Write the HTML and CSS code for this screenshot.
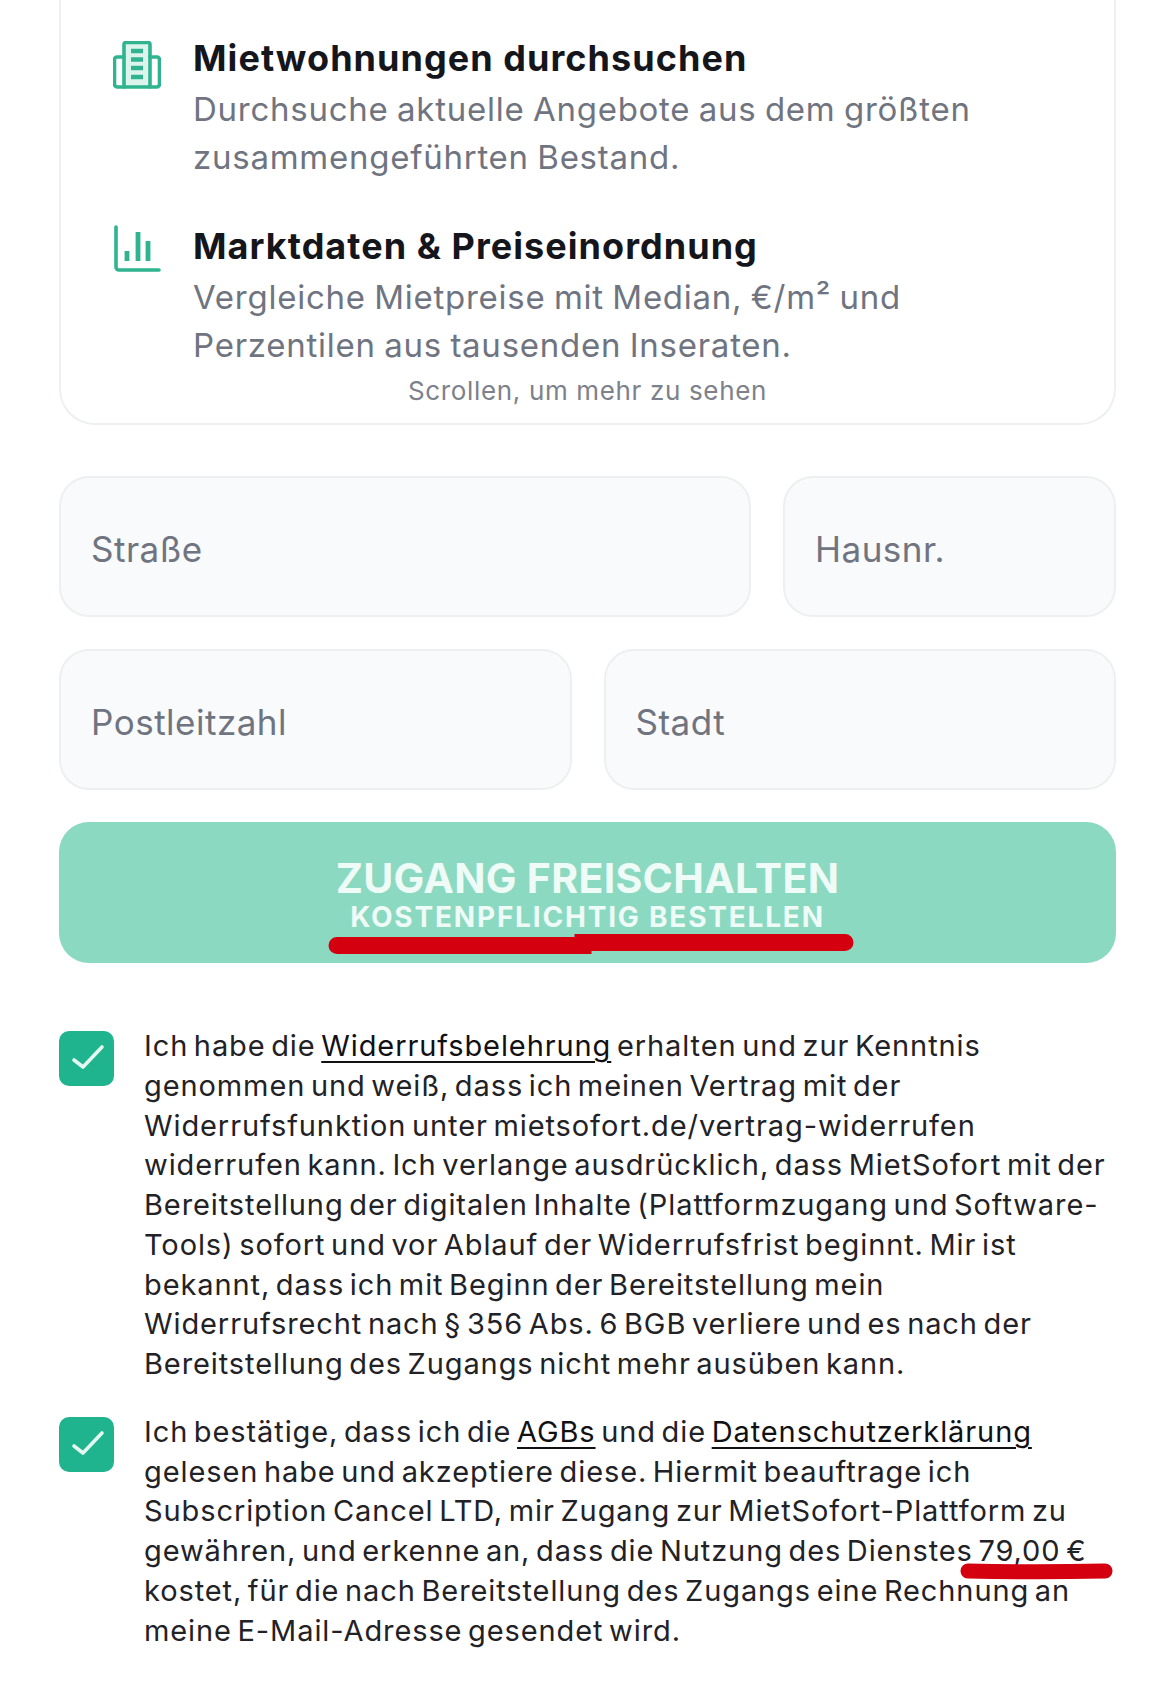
FILE: index.html
```html
<!DOCTYPE html>
<html lang="de">
<head>
  <meta charset="UTF-8">
  <meta name="viewport" content="width=device-width, initial-scale=1.0">
  <title>Zugang freischalten</title>
  <link rel="stylesheet" href="styles.css">
</head>
<body>
  <div class="container">

    <!-- Features Card -->
    <div class="card">
      <div class="feature">
        <svg class="feature-icon" viewBox="0 0 48 48" fill="none" stroke="#2fb48f" stroke-width="3.6" stroke-linejoin="round" stroke-linecap="round">
          <path d="M11 46V3.500a2 2 0 0 1 2-2h22a2 2 0 0 1 2 2V46" fill="#dcf4ec"/>
          <path d="M11 16H4a2.500 2.500 0 0 0-2.500 2.500V43a3 3 0 0 0 3 3h39a3 3 0 0 0 3-3V18.500a2.500 2.500 0 0 0-2.500-2.500H37"/>
          <path d="M18 10h12M18 18.500h12M18 27h12M18 36h12" stroke-width="4.400" stroke-linecap="butt"/>
        </svg>
        <div class="feature-text">
          <h3 class="feature-title">Mietwohnungen durchsuchen</h3>
          <p class="feature-desc">Durchsuche aktuelle Angebote aus dem größten<br>zusammengeführten Bestand.</p>
        </div>
      </div>
      <div class="feature">
        <svg class="feature-icon icon-chart" viewBox="0 0 48 48" fill="none" stroke="#2fb48f" stroke-width="3.6" stroke-linejoin="round" stroke-linecap="round">
          <path d="M3 2v40a3 3 0 0 0 3 3h40"/>
          <path d="M14 26v10M25 7v29M35 16v20" stroke-width="4.800" stroke-linecap="butt"/>
        </svg>
        <div class="feature-text">
          <h3 class="feature-title">Marktdaten &amp; Preiseinordnung</h3>
          <p class="feature-desc">Vergleiche Mietpreise mit Median, €/m² und<br>Perzentilen aus tausenden Inseraten.</p>
        </div>
      </div>
      <p class="scroll-hint">Scrollen, um mehr zu sehen</p>
    </div>

    <!-- Address Fields -->
    <div class="field-row row-street">
      <div class="field">Straße</div>
      <div class="field">Hausnr.</div>
    </div>
    <div class="field-row row-city">
      <div class="field">Postleitzahl</div>
      <div class="field">Stadt</div>
    </div>

    <!-- Order Button -->
    <button class="button">
      <span class="button-main">ZUGANG FREISCHALTEN</span>
      <span class="button-sub">KOSTENPFLICHTIG BESTELLEN</span>
      <svg class="mark mark-button" viewBox="0 0 526 20"><path d="M9 11.500H255V8.500H517" fill="none" stroke="#d4000f" stroke-width="17" stroke-linecap="round"/></svg>
    </button>

    <!-- Consent Checkboxes -->
    <div class="consent">
      <span class="checkbox">
        <svg viewBox="0 0 55 55" fill="none" stroke="#e2f8f0" stroke-width="3.6" stroke-linecap="round" stroke-linejoin="round"><path d="M15 29l9 7 19-20"/></svg>
      </span>
      <p class="consent-text">Ich habe die <a href="#">Widerrufsbelehrung</a> erhalten und zur Kenntnis<br>genommen und weiß, dass ich meinen Vertrag mit der<br>Widerrufsfunktion unter mietsofort.de/vertrag-widerrufen<br>widerrufen kann. Ich verlange ausdrücklich, dass MietSofort mit der<br>Bereitstellung der digitalen Inhalte (Plattformzugang und Software-<br>Tools) sofort und vor Ablauf der Widerrufsfrist beginnt. Mir ist<br>bekannt, dass ich mit Beginn der Bereitstellung mein<br>Widerrufsrecht nach § 356 Abs. 6 BGB verliere und es nach der<br>Bereitstellung des Zugangs nicht mehr ausüben kann.</p>
    </div>
    <div class="consent">
      <span class="checkbox">
        <svg viewBox="0 0 55 55" fill="none" stroke="#e2f8f0" stroke-width="3.6" stroke-linecap="round" stroke-linejoin="round"><path d="M15 29l9 7 19-20"/></svg>
      </span>
      <p class="consent-text">Ich bestätige, dass ich die <a href="#">AGBs</a> und die <a href="#">Datenschutzerklärung</a><br>gelesen habe und akzeptiere diese. Hiermit beauftrage ich<br>Subscription Cancel LTD, mir Zugang zur MietSofort-Plattform zu<br>gewähren, und erkenne an, dass die Nutzung des Dienstes <span class="price">79,00 €<svg class="mark mark-price" viewBox="0 0 153 18"><path d="M8 9C50 10 100 10 145 9" fill="none" stroke="#d4000f" stroke-width="15" stroke-linecap="round"/></svg></span><br>kostet, für die nach Bereitstellung des Zugangs eine Rechnung an<br>meine E-Mail-Adresse gesendet wird.</p>
    </div>

  </div>
</body>
</html>
```

FILE: styles.css
```css
/* Global Styles */
body {
  font-family: Inter, "Open Sans", sans-serif;
  background-color: #fff;
  color: #222226;
  margin: 0;
}
.container {
  width: 1057px;
  margin-left: 59px;
}

/* Card Styles */
.card {
  padding: 31px 48px 14px;
  border: 2px solid #eeeff1;
  border-top: none;
  border-radius: 0 0 36px 36px;
}
.feature {
  display: flex;
  gap: 32px;
  margin-bottom: 38px;
}
.feature:last-of-type {
  margin-bottom: 0;
}
.feature-icon {
  width: 48px;
  height: 48px;
  flex-shrink: 0;
  margin-top: 10px;
  margin-left: 4px;
}
.icon-chart {
  margin-top: 6px;
}
.feature-title {
  margin: 0;
  font-size: 36px;
  line-height: 54px;
  font-weight: 700;
  color: #14161c;
  letter-spacing: 1.05px;
}
.feature-desc {
  margin: 0;
  font-size: 33px;
  line-height: 48px;
  color: #6f7480;
  letter-spacing: 0.75px;
  word-spacing: -1.6px;
  white-space: nowrap;
}
.scroll-hint {
  margin: 4px 0 0;
  font-size: 26px;
  line-height: 36px;
  letter-spacing: 0.65px;
  text-align: center;
  color: #7d818b;
}

/* Form Styles */
.field-row {
  display: grid;
  gap: 32px;
  margin-top: 32px;
}
.row-street {
  grid-template-columns: 692px 1fr;
  margin-top: 51px;
}
.row-city {
  grid-template-columns: 1fr 1fr;
}
.field {
  height: 141px;
  box-sizing: border-box;
  padding: 4px 30px 0;
  display: flex;
  align-items: center;
  font-size: 35px;
  letter-spacing: 0.5px;
  color: #6f7480;
  background-color: #f9fafb;
  border: 2px solid #eeeff1;
  border-radius: 30px;
}

/* Button Styles */
.button {
  position: relative;
  display: flex;
  flex-direction: column;
  align-items: center;
  width: 100%;
  height: 141px;
  margin-top: 32px;
  padding: 30px 0 0;
  border: none;
  border-radius: 30px;
  background-color: #8bd9c1;
  color: #eefbf6;
  font-family: inherit;
  cursor: pointer;
}
.button-main {
  font-size: 41px;
  line-height: 52px;
  font-weight: 700;
  letter-spacing: 0.3px;
}
.button-sub {
  font-size: 28px;
  line-height: 26px;
  font-weight: 700;
  letter-spacing: 1.8px;
}
.mark {
  position: absolute;
}
.mark-button {
  left: 269px;
  top: 112px;
  width: 526px;
  height: 20px;
}

/* Consent Styles */
.consent {
  display: flex;
  gap: 30px;
  margin-top: 63px;
}
.consent + .consent {
  margin-top: 28px;
}
.checkbox {
  width: 55px;
  height: 55px;
  flex-shrink: 0;
  margin-top: 5px;
  background-color: #1fb48e;
  border-radius: 10px;
}
.checkbox svg {
  display: block;
  width: 55px;
  height: 55px;
}
.consent-text {
  margin: 0;
  font-size: 29px;
  line-height: 39.75px;
  letter-spacing: 0.9px;
  word-spacing: -3.4px;
  white-space: nowrap;
}
.consent-text a {
  color: #111114;
  text-decoration: underline;
  text-decoration-thickness: 2px;
  text-underline-offset: 5px;
}
.price {
  position: relative;
}
.mark-price {
  left: -18px;
  top: 29px;
  width: 153px;
  height: 18px;
}
```
